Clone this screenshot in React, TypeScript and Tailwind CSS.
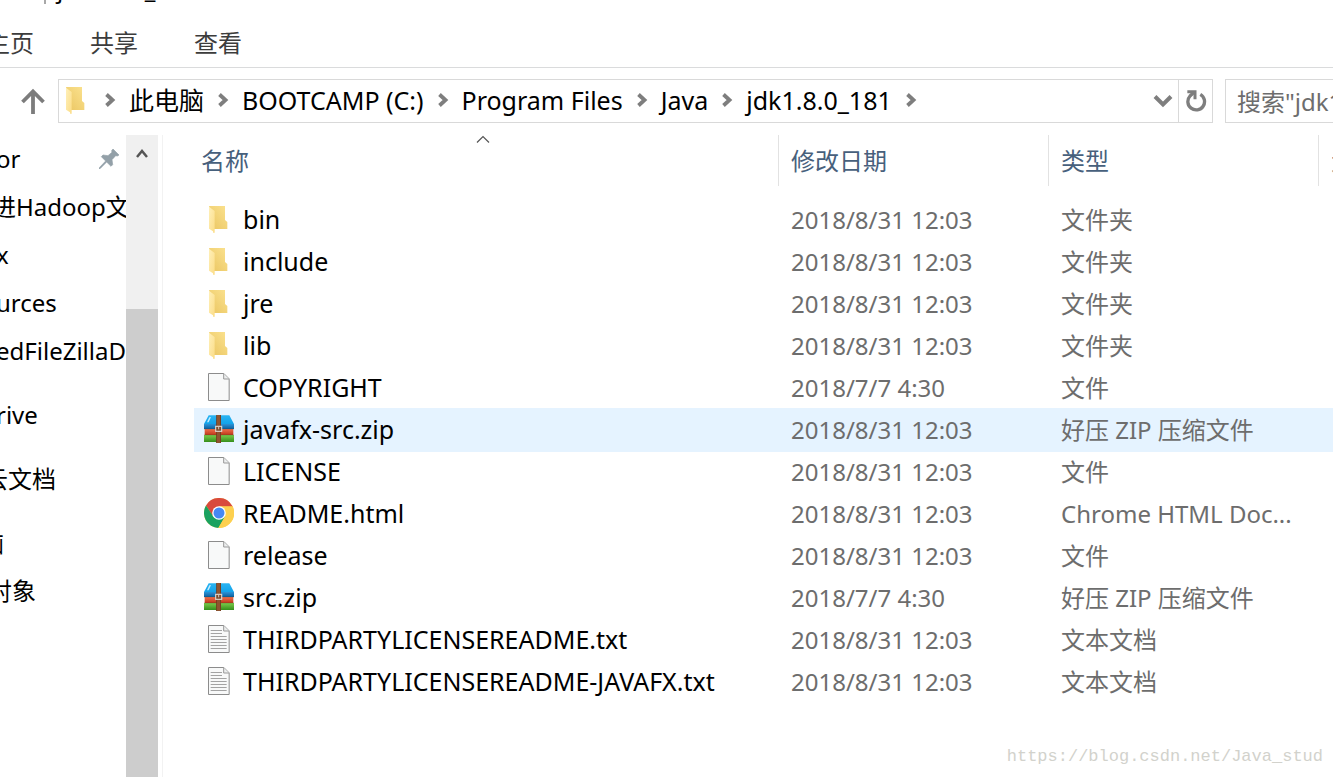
import type { ReactNode } from "react";

type IconKind = "folder" | "file" | "text" | "zip" | "chrome";

type Entry = { name: string; icon: IconKind; date: string; type: string; active?: boolean };

const entries: Entry[] = [
  { name: "bin", icon: "folder", date: "2018/8/31 12:03", type: "文件夹" },
  { name: "include", icon: "folder", date: "2018/8/31 12:03", type: "文件夹" },
  { name: "jre", icon: "folder", date: "2018/8/31 12:03", type: "文件夹" },
  { name: "lib", icon: "folder", date: "2018/8/31 12:03", type: "文件夹" },
  { name: "COPYRIGHT", icon: "file", date: "2018/7/7 4:30", type: "文件" },
  { name: "javafx-src.zip", icon: "zip", date: "2018/8/31 12:03", type: "好压 ZIP 压缩文件", active: true },
  { name: "LICENSE", icon: "file", date: "2018/8/31 12:03", type: "文件" },
  { name: "README.html", icon: "chrome", date: "2018/8/31 12:03", type: "Chrome HTML Doc..." },
  { name: "release", icon: "file", date: "2018/8/31 12:03", type: "文件" },
  { name: "src.zip", icon: "zip", date: "2018/7/7 4:30", type: "好压 ZIP 压缩文件" },
  { name: "THIRDPARTYLICENSEREADME.txt", icon: "text", date: "2018/8/31 12:03", type: "文本文档" },
  { name: "THIRDPARTYLICENSEREADME-JAVAFX.txt", icon: "text", date: "2018/8/31 12:03", type: "文本文档" },
];

const crumbs = ["此电脑", "BOOTCAMP (C:)", "Program Files", "Java", "jdk1.8.0_181"];

const sideGroups: { label: string; shift: string; pinned?: boolean }[][] = [
  [
    { label: "or", shift: "-ml-1", pinned: true },
    { label: "进Hadoop文", shift: "-ml-2" },
    { label: "x", shift: "-ml-1" },
    { label: "urces", shift: "-ml-1" },
    { label: "edFileZillaD", shift: "-ml-1" },
  ],
  [{ label: "rive", shift: "-ml-1" }],
  [{ label: "云文档", shift: "-ml-4" }],
  [
    { label: "脑", shift: "-ml-5" },
    { label: "对象", shift: "-ml-3" },
  ],
];

function FolderIcon() {
  return (
    <svg width="20" height="28" viewBox="0 -3 60 84" className="shrink-0" aria-hidden="true">
      <defs>
        <linearGradient id="folderBack" x1="0" y1="1" x2="1" y2="0">
          <stop offset="0" stopColor="#eac561" />
          <stop offset="1" stopColor="#fbe28f" />
        </linearGradient>
        <linearGradient id="folderFront" x1="0" y1="0" x2="1" y2="1">
          <stop offset="0" stopColor="#fff0b9" />
          <stop offset="1" stopColor="#fbdc86" />
        </linearGradient>
      </defs>
      <path d="M0 0h48v42l7 6v21H15z" fill="url(#folderBack)" />
      <path d="M0 2l17 13v65l-4 1-1-5L0 68z" fill="url(#folderFront)" />
    </svg>
  );
}

function PageIcon({ lines }: { lines?: boolean }) {
  return (
    <svg width="22" height="28" viewBox="0 0 66 84" aria-hidden="true">
      <path d="M1.5 1.5h46l16 16v65h-62z" fill="#f8f9f9" stroke="#8c8c8c" strokeWidth="3" />
      <path d="M47 2v16h16" fill="#eceeee" stroke="#9a9a9a" strokeWidth="3" />
      {lines && (
        <path
          d="M8 16.500h34M8 25.500h34M8 34.500h48M8 43.500h48M8 52.500h48M8 61.500h48M8 70.500h48"
          stroke="#a3a3a3"
          strokeWidth="3"
        />
      )}
    </svg>
  );
}

function ZipIcon() {
  return (
    <svg width="30" height="28" viewBox="0 0 90 84" aria-hidden="true">
      <defs>
        <linearGradient id="zipTop" x1="0" y1="0" x2="0" y2="1">
          <stop offset="0" stopColor="#2bb4f2" />
          <stop offset="1" stopColor="#12a3ea" />
        </linearGradient>
        <linearGradient id="zipBlue" x1="0" y1="0" x2="0" y2="1">
          <stop offset="0" stopColor="#2c93d6" />
          <stop offset="1" stopColor="#0a5f9f" />
        </linearGradient>
        <linearGradient id="zipRed" x1="0" y1="0" x2="0" y2="1">
          <stop offset="0" stopColor="#f0704e" />
          <stop offset="1" stopColor="#bd3719" />
        </linearGradient>
        <linearGradient id="zipGreen" x1="0" y1="0" x2="0" y2="1">
          <stop offset="0" stopColor="#7ccb4c" />
          <stop offset="1" stopColor="#358f1b" />
        </linearGradient>
      </defs>
      <path d="M14 1h62l14 26H0z" fill="url(#zipTop)" />
      <path d="M16 7l5-1-7 16H9z" fill="#c4ecfd" />
      <path d="M0 27h90v15H0z" fill="url(#zipBlue)" />
      <path d="M2 42h86v18H2z" fill="url(#zipRed)" />
      <path d="M0 60h90v21H0z" fill="url(#zipGreen)" />
      <path d="M0 42h90M0 60h90" stroke="#33402a" strokeOpacity="0.4" strokeWidth="2" />
      <path d="M38 0h13v84H37z" fill="#8f5430" />
      <path d="M37 0h2v84h-2zM49 0h2v84h-2z" fill="#6b3718" />
      <rect x="35" y="34" width="18" height="15" fill="#7b4a2c" stroke="#dcd5ce" strokeWidth="3.500" />
      <path d="M44 36v7" stroke="#e8e2dc" strokeWidth="2.500" />
    </svg>
  );
}

function ChromeIcon() {
  return (
    <svg width="30" height="30" viewBox="0 0 90 90" aria-hidden="true">
      <circle cx="45" cy="45" r="45" fill="#fdd04f" />
      <path d="M6 22.500A45 45 0 0 1 84 22.500Q86 25 86 26H45L27 55z" fill="#d94a3d" />
      <path d="M6 22.500A45 45 0 0 0 43 90L64 54 45 62 27 54z" fill="#1aa260" />
      <path d="M45 25h41a45 45 0 0 1-43 65l21-36z" fill="#fdd04f" />
      <circle cx="45" cy="45" r="20.500" fill="#fff" />
      <circle cx="45" cy="45" r="16.500" fill="#4688f4" />
    </svg>
  );
}

const icons: Record<IconKind, ReactNode> = {
  folder: <FolderIcon />,
  file: <PageIcon />,
  text: <PageIcon lines />,
  zip: <ZipIcon />,
  chrome: <ChromeIcon />,
};

function CrumbChevron() {
  return (
    <svg width="12" height="16" viewBox="0 0 12 16" className="mx-[13px] shrink-0" aria-hidden="true">
      <path d="M2.500 2.500L8.500 8l-6 5.500" fill="none" stroke="#7e7e7e" strokeWidth="3.800" />
    </svg>
  );
}

function TitleBar() {
  return (
    <div className="flex h-1 items-end overflow-hidden pl-[44px] leading-[30px]">
      <span className="mr-[11px] h-1 w-0.5 shrink-0 bg-[#a8a8a8]" />
      <span>jdk1.8.0_181</span>
    </div>
  );
}

function Ribbon() {
  return (
    <nav className="flex h-16 items-center gap-14 border-b border-[#dadbdc] pt-3.5 text-[#3c3c3c]">
      <button className="-ml-[14px]">主页</button>
      <button>共享</button>
      <button>查看</button>
    </nav>
  );
}

function AddressBar() {
  return (
    <div className="flex items-center pt-[11px] pb-3">
      <button aria-label="上移" className="flex w-[58px] shrink-0 justify-end pr-3">
        <svg width="26" height="26" viewBox="0 0 26 26" fill="none" stroke="#7c7c7c" strokeWidth="3.800">
          <path d="M13 26V4M2.500 14L13 3.500 23.500 14" />
        </svg>
      </button>
      <div className="flex h-11 min-w-0 flex-1 border border-[#d9d9d9]">
        <div className="flex min-w-0 flex-1 items-center overflow-hidden pb-0.5 pl-[7px] text-[25px] whitespace-nowrap">
          <FolderIcon />
          <span className="w-[5px] shrink-0" />
          {crumbs.map((crumb) => (
            <span key={crumb} className="flex items-center">
              <CrumbChevron />
              <button>{crumb}</button>
            </span>
          ))}
          <CrumbChevron />
        </div>
        <button aria-label="最近浏览的位置" className="flex w-[30px] shrink-0 items-center justify-center">
          <svg width="20" height="14" viewBox="0 0 20 14" fill="none" stroke="#7e7e7e" strokeWidth="4">
            <path d="M2 2.500l8 8 8-8" />
          </svg>
        </button>
        <button
          aria-label="刷新"
          className="flex w-[34px] shrink-0 items-center justify-center border-l border-[#d9d9d9]"
        >
          <svg width="22" height="22" viewBox="0 0 66 66" fill="none" stroke="#7e7e7e" strokeWidth="10">
            <path d="M46 13A25 25 0 1 1 15 18L27 7" />
            <path d="M7 5h23v23" strokeWidth="9" />
          </svg>
        </button>
      </div>
      <div className="ml-3 h-11 w-[108px] shrink-0 overflow-hidden border border-r-0 border-[#d9d9d9] pl-[11px]">
        <input
          type="text"
          aria-label="搜索"
          placeholder={'搜索"jdk1.8.0_181"'}
          className="h-full w-60 outline-none placeholder:text-[#6d6d6d]"
        />
      </div>
    </div>
  );
}

function Sidebar() {
  return (
    <aside className="flex w-[163px] shrink-0 border-r border-[#f2f2f2]">
      <div className="flex min-w-0 flex-1 flex-col gap-4 overflow-hidden">
        {sideGroups.map((group, i) => (
          <ul key={i}>
            {group.map((item) => (
              <li key={item.label} className="flex h-12 items-center justify-between whitespace-nowrap">
                <a href="#" className={item.shift}>
                  {item.label}
                </a>
                {item.pinned && (
                  <svg width="20" height="20" viewBox="0 0 60 60" className="mr-[7px]" aria-hidden="true">
                    <path
                      d="M42 0l18 18-5 3-5-1-11 12 2 15-5 5-13-13L3 59l-3 1 1-4 19-20L7 23l5-5 15 2L39 10l-1-5z"
                      fill="#93a0a8"
                      stroke="#93a0a8"
                      strokeWidth="2"
                    />
                  </svg>
                )}
              </li>
            ))}
          </ul>
        ))}
      </div>
      <div className="mr-1 flex w-8 shrink-0 flex-col bg-[#f0f0f0]">
        <button aria-label="向上滚动" className="flex h-[174px] items-start justify-center pt-[14px]">
          <svg width="12" height="10" viewBox="0 0 12 10" fill="none" stroke="#555" strokeWidth="2.500">
            <path d="M1 8l5-6 5 6" />
          </svg>
        </button>
        <div className="flex-1 bg-[#cdcdcd]" />
      </div>
    </aside>
  );
}

function FileTable() {
  return (
    <main className="relative min-w-0 flex-1 overflow-hidden pl-8">
      <table className="w-full table-fixed border-collapse text-left whitespace-nowrap">
        <colgroup>
          <col />
          <col className="w-[270px]" />
          <col className="w-[270px]" />
          <col className="w-[15px]" />
        </colgroup>
        <thead className="text-[#47607c]">
          <tr>
            {["名称", "修改日期", "类型", "大小"].map((label, i) => (
              <th key={label} className="relative overflow-hidden p-0 pb-[13px] font-normal">
                <div
                  className={
                    i === 0
                      ? "relative mr-2 flex h-[51px] items-center pl-1.5"
                      : "flex h-[51px] items-center border-l border-[#e2e2e2] pl-3"
                  }
                >
                  {label}
                  {i === 0 && (
                    <svg
                      width="14"
                      height="8"
                      viewBox="0 0 14 8"
                      className="absolute top-0 left-1/2 -translate-x-1/2"
                      aria-hidden="true"
                    >
                      <path d="M1 7.500l6-6 6 6" fill="none" stroke="#555" strokeWidth="1.200" />
                    </svg>
                  )}
                </div>
              </th>
            ))}
          </tr>
        </thead>
        <tbody className="text-[#6d6d6d]">
          {entries.map((entry) => (
            <tr
              key={entry.name}
              className={
                entry.active ? "h-[42px] bg-[#e5f3ff] outline outline-[#e5f3ff]" : "h-[42px]"
              }
            >
              <td className="p-0 pl-2 text-black">
                <div className="flex items-center gap-2 pb-0.5">
                  <span className="flex w-8 shrink-0 justify-center">{icons[entry.icon]}</span>
                  <a href="#" className="text-[25px]">
                    {entry.name}
                  </a>
                </div>
              </td>
              <td className="p-0 pl-[13px]">{entry.date}</td>
              <td className="p-0 pl-[13px]">{entry.type}</td>
              <td className="p-0" />
            </tr>
          ))}
        </tbody>
      </table>
      <p className="absolute right-2.5 bottom-2 font-['Liberation_Mono',monospace] text-[17px] leading-6 text-[#d2d2cc]">
        https://blog.csdn.net/Java_stud
      </p>
    </main>
  );
}

export default function App() {
  return (
    <div className="flex min-h-screen flex-col overflow-hidden bg-white font-['Noto_Sans','Noto_Sans_CJK_SC',sans-serif] text-[24px] leading-[30px] text-black">
      <TitleBar />
      <Ribbon />
      <AddressBar />
      <div className="flex flex-1">
        <Sidebar />
        <FileTable />
      </div>
    </div>
  );
}
